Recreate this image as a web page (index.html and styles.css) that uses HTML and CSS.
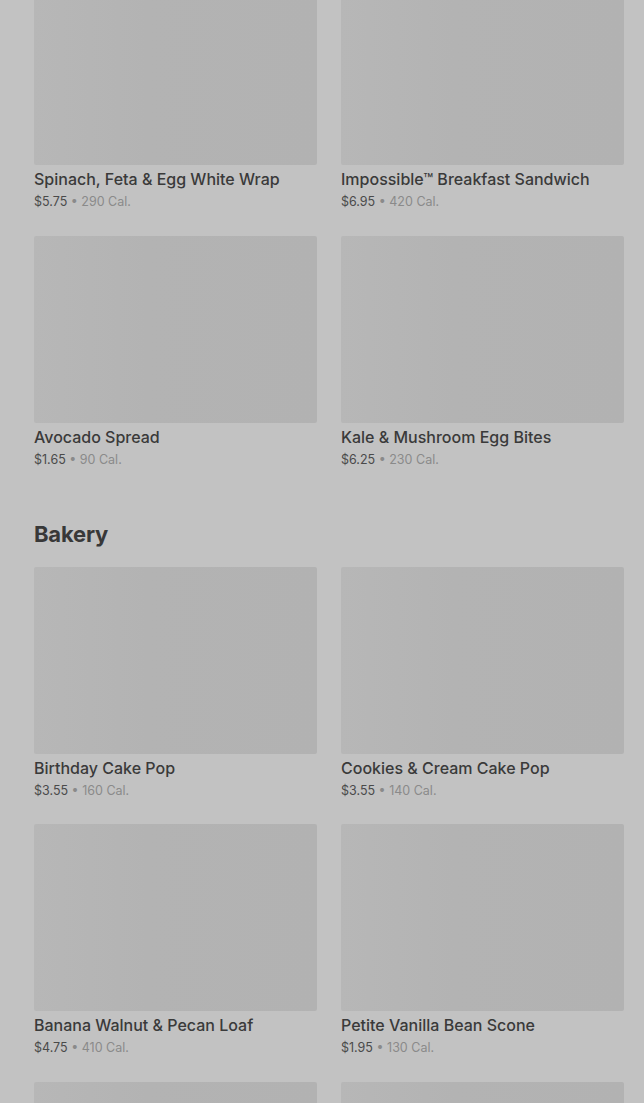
FILE: index.html
```html
<!DOCTYPE html>
<html lang="en">
<head>
  <meta charset="UTF-8">
  <meta name="viewport" content="width=device-width, initial-scale=1.0">
  <title>Menu</title>
  <link rel="stylesheet" href="styles.css">
</head>
<body>

  <div class="menu">

    <!-- Breakfast (scrolled) -->
    <section class="section section-scrolled">
      <div class="grid">
        <div class="item">
          <div class="thumb"></div>
          <div class="name">Spinach, Feta &amp; Egg White Wrap</div>
          <div class="meta"><span class="price">$5.75</span> &bull; 290 Cal.</div>
        </div>
        <div class="item">
          <div class="thumb"></div>
          <div class="name">Impossible™ Breakfast Sandwich</div>
          <div class="meta"><span class="price">$6.95</span> &bull; 420 Cal.</div>
        </div>
        <div class="item">
          <div class="thumb"></div>
          <div class="name">Avocado Spread</div>
          <div class="meta"><span class="price">$1.65</span> &bull; 90 Cal.</div>
        </div>
        <div class="item">
          <div class="thumb"></div>
          <div class="name">Kale &amp; Mushroom Egg Bites</div>
          <div class="meta"><span class="price">$6.25</span> &bull; 230 Cal.</div>
        </div>
      </div>
    </section>

    <!-- Bakery -->
    <section class="section">
      <h2 class="section-title">Bakery</h2>
      <div class="grid">
        <div class="item">
          <div class="thumb"></div>
          <div class="name">Birthday Cake Pop</div>
          <div class="meta"><span class="price">$3.55</span> &bull; 160 Cal.</div>
        </div>
        <div class="item">
          <div class="thumb"></div>
          <div class="name">Cookies &amp; Cream Cake Pop</div>
          <div class="meta"><span class="price">$3.55</span> &bull; 140 Cal.</div>
        </div>
        <div class="item">
          <div class="thumb"></div>
          <div class="name">Banana Walnut &amp; Pecan Loaf</div>
          <div class="meta"><span class="price">$4.75</span> &bull; 410 Cal.</div>
        </div>
        <div class="item">
          <div class="thumb"></div>
          <div class="name">Petite Vanilla Bean Scone</div>
          <div class="meta"><span class="price">$1.95</span> &bull; 130 Cal.</div>
        </div>
        <!-- next row, only the pictures are in view -->
        <div class="item">
          <div class="thumb"></div>
        </div>
        <div class="item">
          <div class="thumb"></div>
        </div>
      </div>
    </section>

  </div>

</body>
</html>
```

FILE: styles.css
```css
* {
  margin: 0;
  padding: 0;
  box-sizing: border-box;
}

body {
  font-family: Inter, "Noto Sans", sans-serif;
  background-color: #c2c2c2;
  color: #3b3b3b;
  overflow: hidden;
}

.menu {
  padding: 0 20px 0 34px;
}

.section-scrolled {
  margin-top: -22px;
}

.section + .section {
  margin-top: 51px;
}

.section-title {
  font-size: 22px;
  line-height: 28px;
  font-weight: 700;
  letter-spacing: -0.2px;
  color: #383838;
  margin-bottom: 19px;
}

.grid {
  display: grid;
  grid-template-columns: 283px 283px;
  column-gap: 24px;
  row-gap: 24.5px;
}

.thumb {
  height: 187px;
  border-radius: 2px;
  background: linear-gradient(90deg, #b7b7b7 0%, #b3b3b3 40%, #b2b2b2 100%);
}

.name {
  margin-top: 3px;
  font-size: 16px;
  line-height: 22px;
  font-weight: 500;
  color: #3a3a3a;
  white-space: nowrap;
}

.meta {
  margin-top: 3px;
  font-size: 12.5px;
  line-height: 18px;
  color: #8a8a8a;
}

.price {
  color: #4a4a4a;
}
```
